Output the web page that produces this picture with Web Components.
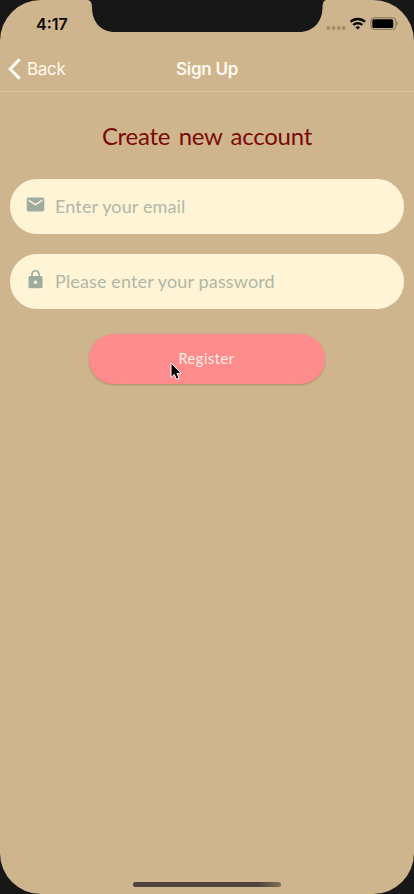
<!DOCTYPE html>
<html lang="en">
<head>
<meta charset="utf-8">
<title>Sign Up</title>
<style>
html,body{margin:0;height:100%;background:#171717}
</style>
</head>
<body>
<phone-screen>
  <status-bar time="4:17"></status-bar>
  <nav-bar back="Back">Sign Up</nav-bar>
  <sign-up-form>
    <page-heading>Create new account</page-heading>
    <input-field>
      <svg slot="icon" width="21" height="21" viewBox="0 0 24 24" fill="#9eaca0"><path d="M20 4H4c-1.100 0-1.990.9-1.990 2L2 18c0 1.100.9 2 2 2h16c1.100 0 2-.9 2-2V6c0-1.100-.9-2-2-2zm0 4l-8 5-8-5V6l8 5 8-5v2z"/></svg>
      Enter your email
    </input-field>
    <input-field>
      <svg slot="icon" width="21" height="21" viewBox="0 0 24 24" fill="#9eaca0"><path d="M18 8h-1V6c0-2.760-2.240-5-5-5S7 3.240 7 6v2H6c-1.100 0-2 .9-2 2v10c0 1.100.9 2 2 2h12c1.100 0 2-.9 2-2V10c0-1.100-.9-2-2-2zm-6 9c-1.100 0-2-.9-2-2s.9-2 2-2 2 .9 2 2-.9 2-2 2zm3.100-9H8.900V6c0-1.710 1.390-3.100 3.100-3.100s3.100 1.390 3.100 3.100v2z"/></svg>
      Please enter your password
    </input-field>
    <action-button>Register</action-button>
  </sign-up-form>
  <home-indicator></home-indicator>
</phone-screen>
<script>
function define(name, markup) {
  const template = document.createElement('template');
  template.innerHTML = markup;
  customElements.define(name, class extends HTMLElement {
    constructor() {
      super();
      this.attachShadow({mode: 'open'}).append(template.content.cloneNode(true));
    }
    connectedCallback() {
      for (const el of this.shadowRoot.querySelectorAll('[data-attr]'))
        el.textContent = this.getAttribute(el.dataset.attr);
    }
  });
}

define('phone-screen', `
<style>
:host{display:flex;flex-direction:column;box-sizing:border-box;width:414px;height:894px;background:#cfb58d;border-radius:41px;overflow:hidden;position:relative;font-family:Inter,"Liberation Sans",sans-serif}
.notch{position:absolute;left:86px;top:0;width:242px;height:32px}
</style>
<svg class="notch" viewBox="0 0 242 32"><path fill="#171717" d="M2 0Q6 1 6 7C6 22 15 32 29 32H213C227 32 236.500 22 236.500 7Q236.500 1 240 0Z"/></svg>
<slot></slot>`);

define('status-bar', `
<style>
:host{display:flex;height:47px;justify-content:space-between;align-items:center;box-sizing:border-box;padding:0 16px 0 36px;color:#080604}
.time{font-weight:600;font-size:16px;line-height:20px;letter-spacing:0}
svg{display:block}
</style>
<span class="time" data-attr="time"></span>
<svg width="72" height="18" viewBox="326 15 72 18">
  <g fill="#a08b6b"><circle cx="328.300" cy="28" r="1.900"/><circle cx="333.500" cy="28" r="1.900"/><circle cx="338.700" cy="28" r="1.900"/><circle cx="343.700" cy="28" r="1.900"/></g>
  <g fill="none" stroke="#080604" stroke-width="2.400"><path d="M350.600 21.900a10.400 10.400 0 0 1 14.400 0"/><path d="M353.300 25a6.500 6.500 0 0 1 9 0"/></g>
  <path fill="#080604" d="M355.500 27.200a3.400 3.400 0 0 1 4.600 0L357.800 29.600Z"/>
  <rect x="370.900" y="17.800" width="25" height="11.600" rx="3.300" fill="none" stroke="#806e53" stroke-width="1"/>
  <rect x="372.300" y="19.200" width="21" height="8.800" rx="1.600" fill="#000"/>
  <path d="M396.500 21.500Q399 23.600 396.500 25.700Z" fill="#806e53"/>
</svg>`);

define('nav-bar', `
<style>
:host{display:grid;grid-template-columns:1fr auto 1fr;align-items:center;height:44px;border-bottom:1px solid #d5c1a1;color:#fff9ee;padding:0 8px;line-height:22px}
.back{display:flex;align-items:center;gap:6px;font-size:17px;letter-spacing:-.3px}
.title{font-weight:600;font-size:17px;letter-spacing:-.25px}
svg{display:block}
</style>
<span class="back"><svg width="13" height="22" viewBox="0 0 13 22" fill="none" stroke="#fffdf7" stroke-width="3"><path d="M11.700 1.300L2.200 11l9.500 9.700"/></svg><span data-attr="back"></span></span>
<span class="title"><slot></slot></span>`);

define('sign-up-form', `
<style>
:host{display:flex;flex-direction:column;align-items:stretch;gap:20px;padding:28px 10px 0;flex:1}
</style><slot></slot>`);

define('page-heading', `
<style>
:host{display:block;text-align:center;color:#7c0906;font:400 24px/32px Lato,sans-serif;letter-spacing:-.25px;word-spacing:2.500px;margin-bottom:7px}
</style><slot></slot>`);

define('input-field', `
<style>
:host{display:flex;align-items:center;gap:9px;box-sizing:border-box;height:55px;padding:0 14px;border-radius:27px;background:#fff4d6;color:#aeb8a6;font:400 18px/24px Lato,sans-serif;letter-spacing:.14px}
.icon{display:flex;justify-content:center;width:22px;padding-bottom:5px}
.label{padding-bottom:2px}
</style><span class="icon"><slot name="icon"></slot></span><span class="label"><slot></slot></span>`);

define('action-button', `
<style>
:host{display:flex;align-self:center;align-items:center;justify-content:center;width:236px;height:50px;margin:5px 1px 0 0;border-radius:25px;background:#ff8c8c;color:#fff0e6;box-shadow:0 1px 2px #80604080;font:400 14.500px/20px Lato,sans-serif;letter-spacing:.55px;position:relative}
.pointer{position:absolute;left:81px;top:28px}
</style><slot></slot>
<svg class="pointer" width="14" height="20" viewBox="0 0 14 20"><path d="M1 1V15.500L4.300 12.400L6.400 17.300L9 16.200L7 11.400H11.200Z" fill="#000" stroke="#fff" stroke-width="1"/></svg>`);

define('home-indicator', `
<style>
:host{display:block;align-self:center;width:148px;height:5px;border-radius:3px;background:linear-gradient(90deg,#4d433b 0 85%,#807057);margin-bottom:7px}
</style>`);
</script>
</body>
</html>
